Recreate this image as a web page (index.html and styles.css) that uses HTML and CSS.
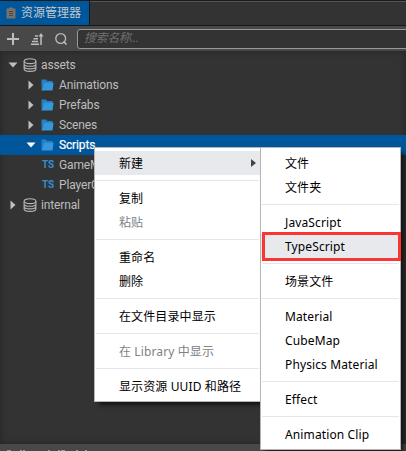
FILE: index.html
```html
<!DOCTYPE html>
<html lang="zh-CN">
<head>
<meta charset="utf-8">
<title>资源管理器</title>
<link rel="stylesheet" href="styles.css">
</head>
<body>
<svg class="defs">
  <symbol id="db" viewBox="0 0 14 14"><g fill="none" stroke="#b5b5b5" stroke-width="1.1"><ellipse cx="7" cy="3.2" rx="5.9" ry="2.4"/><path d="M1.1 3.2v7.8c0 3.1 11.8 3.1 11.8 0V3.2M1.1 5.9c0 3.1 11.8 3.1 11.8 0M1.1 8.5c0 3.1 11.8 3.1 11.8 0"/></g></symbol>
  <symbol id="folder" viewBox="0 0 13 12"><path fill="#2581c4" d="M0.5 0.5h4.5l1.2 1.5h5.3v2H3.2L.5 10z"/><path fill="#3498db" d="M3 3.8h9.6l-1.1 7.7H.4z"/></symbol>
  <symbol id="right" viewBox="0 0 6 10"><path fill="#c0c0c0" d="M.5.5 5.5 5 .5 9.5z"/></symbol>
  <symbol id="down" viewBox="0 0 10 6"><path fill="currentColor" d="M.5.5h9L5 5.5z"/></symbol>
</svg>
<div class="window">
  <header class="tabs">
    <div class="tab">
      <svg class="tab-icon" viewBox="0 0 10 12"><path fill="#77716b" d="M.5 1.5H3V.5h4v1h2.500v10H.5z"/><path stroke="#45474a" d="M3 4.500h4M3 6.500h4M3 8.500h4"/></svg>
      <span>资源管理器</span>
    </div>
  </header>
  <div class="toolbar">
    <svg class="tool" viewBox="0 0 14 14"><path stroke="#bdbdbd" stroke-width="2" d="M1 7h12M7 1v12"/></svg>
    <svg class="tool" viewBox="0 0 14 14"><path fill="none" stroke="#bdbdbd" stroke-width="1.5" d="M1 12.200h8M2 9.500h6M3.500 6.800H8M5 4.100h3M11 13V3"/><path fill="#bdbdbd" d="M8.500 4.500 11 1l2.500 3.500z"/></svg>
    <svg class="tool" viewBox="0 0 14 14"><circle cx="6.700" cy="6.500" r="4.900" fill="none" stroke="#bdbdbd" stroke-width="1.300"/><path stroke="#bdbdbd" stroke-width="1.600" d="m9.500 9.500 3 3"/></svg>
    <div class="search">搜索名称...</div>
  </div>
  <main class="tree">
    <div class="node"><svg class="arrow"><use href="#down"/></svg><svg class="db"><use href="#db"/></svg><span>assets</span></div>
    <div class="node child"><svg class="arrow"><use href="#right"/></svg><svg class="folder"><use href="#folder"/></svg><span>Animations</span></div>
    <div class="node child"><svg class="arrow"><use href="#right"/></svg><svg class="folder"><use href="#folder"/></svg><span>Prefabs</span></div>
    <div class="node child"><svg class="arrow"><use href="#right"/></svg><svg class="folder"><use href="#folder"/></svg><span>Scenes</span></div>
    <div class="node child selected"><svg class="arrow"><use href="#down"/></svg><svg class="folder"><use href="#folder"/></svg><span>Scripts</span></div>
    <div class="node child"><i class="arrow"></i><b class="ts">TS</b><span>GameMgr</span></div>
    <div class="node child"><i class="arrow"></i><b class="ts">TS</b><span>PlayerCtrl</span></div>
    <div class="node"><svg class="arrow"><use href="#right"/></svg><svg class="db"><use href="#db"/></svg><span>internal</span></div>
  </main>
  <footer class="status"><svg class="status-edge" viewBox="0 0 100 1"><path stroke="#999" d="M7 .5h4M20 .5h2M23 .5h2M48 .5h2M58 .5h2M61 .5h4M76 .5h2M85 .5h2"/></svg></footer>
</div>

<div class="menu main-menu">
  <div class="item hover">新建<svg class="more"><path d="M0 0 5 4 0 8z"/></svg></div>
  <hr>
  <div class="item">复制</div>
  <div class="item disabled">粘贴</div>
  <hr>
  <div class="item">重命名</div>
  <div class="item">删除</div>
  <hr>
  <div class="item">在文件目录中显示</div>
  <hr>
  <div class="item disabled">在 Library 中显示</div>
  <hr>
  <div class="item">显示资源 UUID 和路径</div>
</div>
<div class="menu sub-menu">
  <div class="item">文件</div>
  <div class="item">文件夹</div>
  <hr>
  <div class="item">JavaScript</div>
  <div class="item hover marked">TypeScript</div>
  <hr>
  <div class="item">场景文件</div>
  <hr>
  <div class="item">Material</div>
  <div class="item">CubeMap</div>
  <div class="item">Physics Material</div>
  <hr>
  <div class="item">Effect</div>
  <hr>
  <div class="item">Animation Clip</div>
</div>
</body>
</html>
```

FILE: styles.css
```css
* { box-sizing: border-box; }
body { margin: 0; overflow: hidden; }
.defs { display: none; }
svg { flex: none; }

.window {
  display: flex;
  flex-direction: column;
  height: 451px;
  background: #333;
  color: #bdbdbd;
  font: 12px/20px Roboto, "Noto Sans CJK SC", sans-serif;
}

.tabs {
  display: flex;
  height: 26px;
  border-top: 1px solid #1b1b1b;
  border-bottom: 1px solid #171717;
  box-shadow: inset 0 1px #555;
}
.tab {
  display: flex;
  align-items: center;
  gap: 5px;
  width: 90px;
  padding-left: 6px;
  border-right: 1px solid #171717;
  background: #00569b;
  color: #c4c8cc;
  white-space: nowrap;
}
.tab-icon { width: 10px; height: 12px; }

.toolbar {
  display: flex;
  align-items: center;
  height: 25px;
  padding-left: 6px;
  background: #484848;
}
.tool { width: 14px; height: 14px; margin-right: 10px; }
.search {
  flex: 1;
  height: 20px;
  margin: 0 -4px 0 -1px;
  padding-left: 6px;
  border: 1px solid #999;
  border-radius: 3px;
  background: #333;
  color: #707070;
  font-style: italic;
  letter-spacing: -.4px;
  line-height: 17px;
}

.tree {
  flex: 1;
  padding-top: 4px;
  box-shadow: inset 0 0 6px #222;
}
.node {
  display: flex;
  align-items: center;
  height: 20px;
  padding-left: 8px;
  letter-spacing: -.15px;
}
.node.child { padding-left: 26px; }
.selected { background: #00569b; color: #fff; }
.selected span { -webkit-text-stroke: .2px #fff; }
.arrow { width: 10px; height: 10px; margin-right: 5px; }
.db { width: 14px; height: 14px; margin-right: 4px; }
.folder { width: 13px; height: 12px; margin-right: 5px; }
.ts {
  width: 13px;
  margin: 0 4px 0 1px;
  color: #348fcd;
  font-size: 10px;
}
.status {
  display: flex;
  align-items: flex-end;
  height: 7px;
  background: #484848;
}
.status-edge { width: 100px; height: 1px; }

.menu {
  position: absolute;
  top: 147px;
  padding: 3px 0;
  border: 1px solid #b5b5b5;
  background: #fff;
  box-shadow: 4px 4px 4px -1px rgba(0, 0, 0, .6);
  color: #000;
  font: 12px/24px "Noto Sans", "Noto Sans CJK SC", sans-serif;
  letter-spacing: .12px;
}
.main-menu { left: 94px; width: 167px; }
.sub-menu { left: 260px; width: 141px; }
.item {
  position: relative;
  height: 24px;
  padding: 1px 0 0 24px;
  white-space: nowrap;
}
.hover { background: #e8e9ed; }
.disabled { color: #7d8287; }
.more {
  position: absolute;
  top: 8px;
  right: 4px;
  width: 5px;
  height: 8px;
  fill: #444;
}
.menu hr {
  height: 1px;
  margin: 5px 1px;
  border: 0;
  background: #e6e6e8;
}
.marked::after {
  content: "";
  position: absolute;
  inset: -2px -1px -3px 1px;
  border: 3px solid #fa3534;
}
```
